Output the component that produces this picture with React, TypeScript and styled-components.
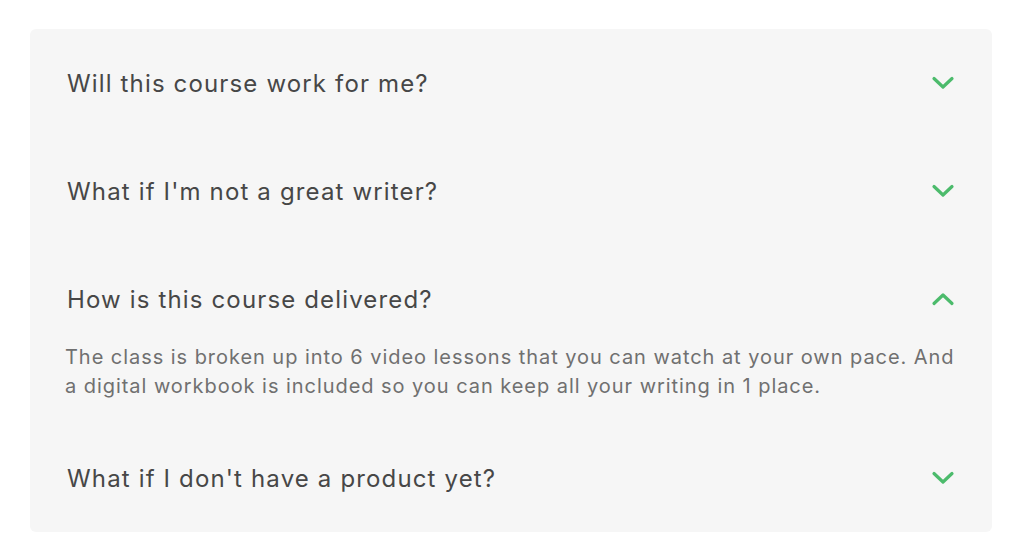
import React, { useState } from "react";
import styled, { createGlobalStyle } from "styled-components";

const Global = createGlobalStyle`
  html, body { margin: 0; padding: 0; background: #ffffff; }
  body { font-family: "Inter", "Noto Sans", sans-serif; }
  * { box-sizing: border-box; }
`;

const Page = styled.div`
  padding: 29px 32px 25px 30px;
`;

const Panel = styled.div`
  background: #f6f6f6;
  border-radius: 6px;
  padding: 30px 37px 30px 37px;
  display: flex;
  flex-direction: column;
`;

const Item = styled.div<{ $last?: boolean; $open?: boolean }>`
  display: flex;
  flex-direction: column;
  margin-bottom: ${(p) => (p.$last ? 0 : p.$open ? 53 : 60)}px;
`;

const Header = styled.button`
  all: unset;
  cursor: pointer;
  height: 48px;
  display: flex;
  align-items: center;
  justify-content: space-between;
`;

const Question = styled.span`
  font-family: "Inter", "Noto Sans", sans-serif;
  font-size: 24px;
  color: #474747;
  letter-spacing: 1.15px;
`;

const Answer = styled.p`
  margin: 20px -10px 0 -2px;
  font-family: "Inter", "Noto Sans", sans-serif;
  font-size: 20px;
  line-height: 29px;
  color: #707070;
  letter-spacing: 0.95px;
`;

const Chevron = ({ up }: { up: boolean }) => (
  <svg width="24" height="14" viewBox="0 0 24 14" fill="none">
    <path
      d={up ? "M3 11.5 L12 3 L21 11.5" : "M3 2.5 L12 11 L21 2.5"}
      stroke="#4cbb6c"
      strokeWidth="3.2"
      strokeLinecap="round"
      strokeLinejoin="round"
    />
  </svg>
);

const items = [
  { q: "Will this course work for me?", a: "" },
  { q: "What if I'm not a great writer?", a: "" },
  {
    q: "How is this course delivered?",
    a: "The class is broken up into 6 video lessons that you can watch at your own pace. And a digital workbook is included so you can keep all your writing in 1 place.",
  },
  { q: "What if I don't have a product yet?", a: "" },
];

export default function App() {
  const [open, setOpen] = useState<number>(2);
  return (
    <>
      <Global />
      <Page>
        <Panel>
          {items.map((it, i) => (
            <Item key={i} $last={i === items.length - 1} $open={open === i}>
              <Header onClick={() => setOpen(open === i ? -1 : i)}>
                <Question>{it.q}</Question>
                <Chevron up={open === i} />
              </Header>
              {open === i && it.a && <Answer>{it.a}</Answer>}
            </Item>
          ))}
        </Panel>
      </Page>
    </>
  );
}
